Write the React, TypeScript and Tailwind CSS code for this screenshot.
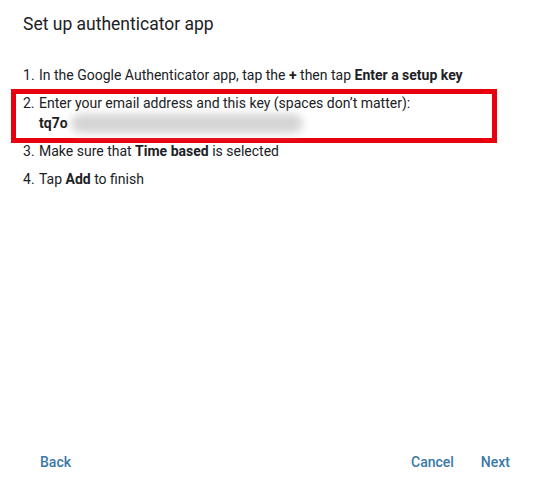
import React from 'react';

const font = { fontFamily: 'Roboto, "Noto Sans", Arial, sans-serif' };

function Step({ n, children }: { n: number; children: React.ReactNode }) {
  return (
    <li className="flex">
      <span className="w-4 shrink-0">{n}.</span>
      <div>{children}</div>
    </li>
  );
}

export default function App() {
  return (
    <div
      className="flex h-[492px] w-[542px] flex-col bg-white text-[#202124]"
      style={font}
    >
      <h1 className="px-[23px] pt-3 text-[17.5px] leading-6 font-normal">Set up authenticator app</h1>

      <ol className="mt-[29px] flex flex-col gap-2 px-[23px] text-[14px] leading-5">
        <Step n={1}>
          In the Google Authenticator app, tap the <b>+</b> then tap <b>Enter a setup key</b>
        </Step>
        <li className="relative">
          {/* red highlight drawn over the step */}
          <div className="pointer-events-none absolute top-[-4px] left-[-12px] h-[54px] w-[486px] border-[5px] border-[#e8000e]" />
          <div className="flex">
            <span className="w-4 shrink-0">2.</span>
            <div>
              <div>Enter your email address and this key (spaces don’t matter):</div>
              <div className="flex items-center">
                <b>tq7o</b>
                <span className="ml-[3px] h-[19px] w-[232px] rounded-full bg-[#d4d4d4] blur-[4px]" />
              </div>
            </div>
          </div>
        </li>
        <Step n={3}>
          Make sure that <b>Time based</b> is selected
        </Step>
        <Step n={4}>
          Tap <b>Add</b> to finish
        </Step>
      </ol>

      <div className="mt-auto flex items-center justify-between pr-6 pb-3 pl-8 text-[14px] font-medium text-[#3b78a7]">
        <button className="h-9 px-2">Back</button>
        <div className="flex gap-[11px]">
          <button className="h-9 px-2">Cancel</button>
          <button className="h-9 px-2">Next</button>
        </div>
      </div>
    </div>
  );
}
